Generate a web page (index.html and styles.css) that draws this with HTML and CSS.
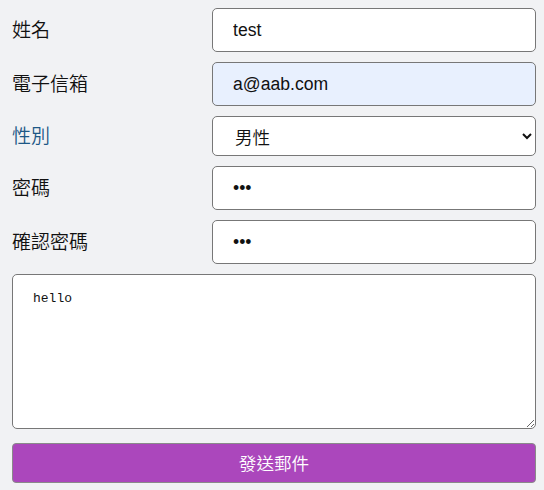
FILE: index.html
```html
<!DOCTYPE html>
<html lang="zh-Hant">
<head>
<meta charset="utf-8">
<title>Form</title>
<link rel="stylesheet" href="styles.css">
</head>
<body>
<form class="form">
  <div class="row">
    <label class="label">姓名</label>
    <input class="field" type="text" value="test">
  </div>
  <div class="row">
    <label class="label">電子信箱</label>
    <input class="field field-autofill" type="email" value="a@aab.com">
  </div>
  <div class="row">
    <label class="label label-accent">性別</label>
    <select class="field select">
      <option>男性</option>
      <option>女性</option>
    </select>
  </div>
  <div class="row">
    <label class="label">密碼</label>
    <input class="field" type="password" value="abc">
  </div>
  <div class="row">
    <label class="label">確認密碼</label>
    <input class="field" type="password" value="abc">
  </div>
  <textarea class="message">hello</textarea>
  <button class="submit" type="button">發送郵件</button>
</form>
</body>
</html>
```

FILE: styles.css
```css
html, body {
  margin: 0;
  background: #f1f2f4;
}

body {
  padding: 8px 8px 0 12px;
}

.form {
  display: flex;
  flex-direction: column;
  gap: 10px;
}

.row {
  display: grid;
  grid-template-columns: 200px 324px;
  align-items: center;
}

.label {
  font-family: "Noto Sans CJK TC", "Noto Sans", sans-serif;
  font-size: 19px;
  font-weight: 350;
  color: #111;
  padding-bottom: 3px;
}

.label-accent {
  color: #1d5886;
}

.field {
  box-sizing: border-box;
  width: 324px;
  height: 44px;
  margin: 0;
  padding: 0 20px;
  border: 1px solid #777;
  border-radius: 5px;
  background: #fff;
  font-family: "Liberation Sans", "Noto Sans CJK TC", sans-serif;
  font-size: 17.6px;
  color: #111;
}

.field-autofill {
  background: #e8f0fe;
}

.select {
  height: 40px;
  padding: 0 18px;
  font-family: "Noto Sans CJK TC", "Liberation Sans", sans-serif;
  font-weight: 350;
}

.message {
  box-sizing: border-box;
  display: block;
  width: 524px;
  height: 155px;
  margin: 0;
  padding: 16px 20px;
  border: 1px solid #777;
  border-radius: 5px;
  background: #fff;
  font-family: "Liberation Mono", monospace;
  font-size: 13px;
  color: #111;
  resize: vertical;
}

.submit {
  box-sizing: border-box;
  width: 524px;
  height: 40px;
  margin: 4px 0 0;
  padding: 0 0 2px;
  border: 1px solid #8a8a8a;
  border-radius: 4px;
  background: #ab47bc;
  color: #ffffff;
  font-family: "Noto Sans CJK TC", "Noto Sans", sans-serif;
  font-size: 17.6px;
  font-weight: 350;
  cursor: pointer;
}
```
